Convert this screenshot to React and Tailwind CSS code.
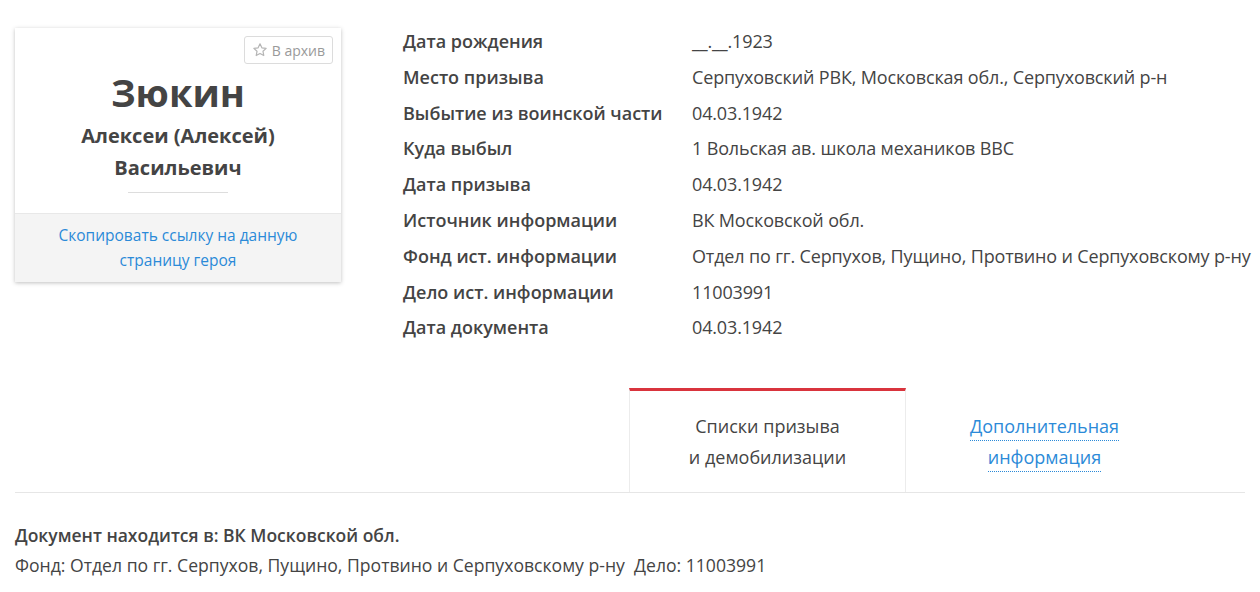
import React from "react";

const rows = [
    ["Дата рождения", "__.__.1923"],
    ["Место призыва", "Серпуховский РВК, Московская обл., Серпуховский р-н"],
    ["Выбытие из воинской части", "04.03.1942"],
    ["Куда выбыл", "1 Вольская ав. школа механиков ВВС"],
    ["Дата призыва", "04.03.1942"],
    ["Источник информации", "ВК Московской обл."],
    ["Фонд ист. информации", "Отдел по гг. Серпухов, Пущино, Протвино и Серпуховскому р-ну"],
    ["Дело ист. информации", "11003991"],
    ["Дата документа", "04.03.1942"],
];

const StarIcon = () => (
    <svg width="16" height="16" viewBox="0 0 24 24" fill="none" stroke="#b5b5b5" strokeWidth="1.8" strokeLinejoin="round">
        <path d="M12 2.8l2.8 5.9 6.4.8-4.7 4.4 1.2 6.4L12 17.2l-5.7 3.1 1.2-6.4-4.7-4.4 6.4-.8z" />
    </svg>
);

const App = () => {
    return (
        <div className="w-[1260px] h-[592px] bg-white overflow-hidden text-[#333] font-['Open_Sans',sans-serif]">
            <div className="flex pt-[28px] pl-[15px]">
                {/* Hero card */}
                <div className="w-[326px] h-[254px] bg-white shadow-[0_1px_4px_rgba(0,0,0,0.25)] flex flex-col">
                    <div className="relative flex-1 flex flex-col items-center pt-[40px]">
                        <button className="absolute top-[8px] right-[8px] h-[28px] px-[7px] flex items-center gap-[4px] border border-[#dcdcdc] rounded-[3px] text-[14px] text-[#9a9a9a]">
                            <StarIcon />
                            В архив
                        </button>
                        <h1 className="text-[38px] leading-[48px] font-bold text-[#444]">Зюкин</h1>
                        <div className="mt-[4px] text-[20px] leading-[32px] font-bold text-[#444] text-center">
                            Алексеи (Алексей)
                            <br />
                            Васильевич
                        </div>
                        <div className="mt-[8px] w-[100px] h-px bg-[#dddddd]" />
                    </div>
                    <div className="h-[69px] bg-[#f4f4f4] border-t border-[#e8e8e8] flex items-center justify-center text-center text-[15.5px] leading-[25px] text-[#2b8ad8]">
                        Скопировать ссылку на данную
                        <br />
                        страницу героя
                    </div>
                </div>

                {/* Info table */}
                <div className="ml-[62px] -mt-[4px] text-[18px] leading-[35.8px]">
                    {rows.map(([label, value]) => (
                        <div key={label} className="flex">
                            <div className="w-[289px] font-semibold text-[#444]">{label}</div>
                            <div className="text-[#444] tracking-[-0.15px] whitespace-nowrap">{value}</div>
                        </div>
                    ))}
                </div>
            </div>

            {/* Tabs */}
            <div className="mt-[42px] mx-[15px] flex border-b border-[#e6e6e6]">
                <div className="ml-[614px] w-[277px] h-[104px] border-t-[3px] border-t-[#d9343d] border-x border-x-[#ececec] -mb-px bg-white flex items-center justify-center text-center text-[18px] leading-[31px] text-[#444]">
                    Списки призыва
                    <br />
                    и демобилизации
                </div>
                <div className="w-[277px] h-[104px] pt-[3px] flex flex-col items-center justify-center text-[18px] leading-[31px] text-[#2b8ad8]">
                    <span className="border-b border-dotted border-[#2b8ad8] leading-[28px]">Дополнительная</span>
                    <span className="border-b border-dotted border-[#2b8ad8] leading-[28px] mt-[2px]">информация</span>
                </div>
            </div>

            {/* Document */}
            <div className="pl-[15px] pt-[27px] leading-[30px] text-[#444]">
                <div className="text-[17.5px] font-semibold">Документ находится в: ВК Московской обл.</div>
                <div className="text-[17.6px]">
                    Фонд: Отдел по гг. Серпухов, Пущино, Протвино и Серпуховскому р-ну&nbsp;&nbsp;Дело: 11003991
                </div>
            </div>
        </div>
    );
};

export default App;
